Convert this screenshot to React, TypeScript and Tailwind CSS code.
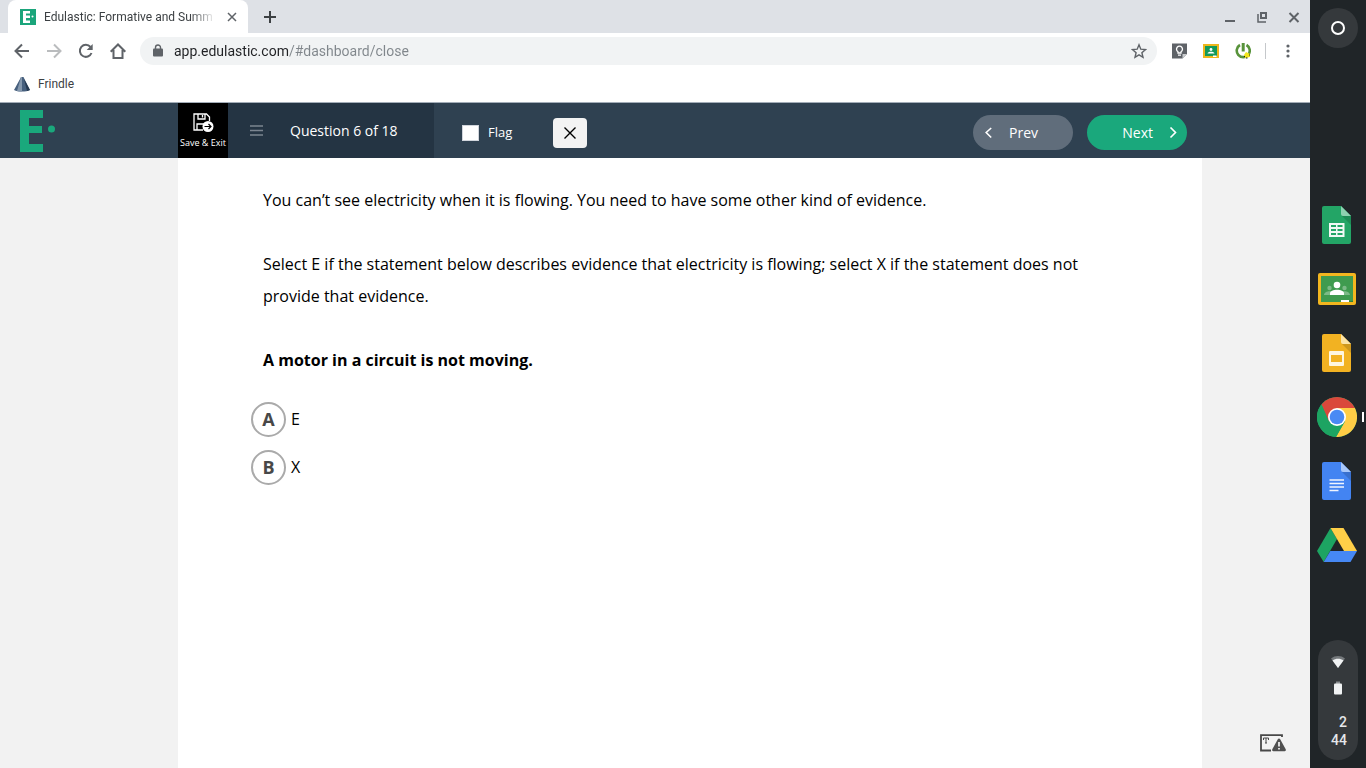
import React from "react";

const choices = [
  { label: "A", text: "E" },
  { label: "B", text: "X" },
];

const FilePage = ({
  color,
  fold,
  children,
}: {
  color: string;
  fold: string;
  children: React.ReactNode;
}) => (
  <svg width="30" height="40" viewBox="0 0 30 40">
    <path d="M2 1h17l10 10v26a2 2 0 0 1-2 2H2a2 2 0 0 1-2-2V3a2 2 0 0 1 2-2z" fill={color} />
    <path d="M20 11h9v9z" fill="#000" opacity=".15" />
    <path d="M19 1l10 10H21a2 2 0 0 1-2-2z" fill={fold} />
    {children}
  </svg>
);

const apps = [
  {
    name: "Sheets",
    icon: (
      <FilePage color="#23a566" fold="#8ed1b1">
        <path
          d="M7 18h15.500v14H7zM9 20v2h5v-2zM15.500 20v2h5v-2zM9 24v2h5v-2zM15.500 24v2h5v-2zM9 28v2h5v-2zM15.500 28v2h5v-2z"
          fill="#f1f8f4"
          fillRule="evenodd"
        />
      </FilePage>
    ),
  },
  {
    name: "Classroom",
    icon: (
      <svg width="38" height="32" viewBox="0 0 38 32">
        <rect width="38" height="32" rx="2" fill="#f2b61f" />
        <rect x="3" y="3" width="32" height="26" fill="#3f9b4f" />
        <g fill="#7cba87">
          <circle cx="11.500" cy="15" r="2.200" />
          <circle cx="26.500" cy="15" r="2.200" />
          <path d="M6 22c0-4 8-5 10-2v2zM32 22c0-4-8-5-10-2v2z" />
        </g>
        <circle cx="19" cy="12" r="3.300" fill="#fff" />
        <path d="M12 22v-1.500c0-5 14-5 14 0V22z" fill="#fff" />
        <path d="M27 29h8v-1z" fill="#2b7a3a" />
        <rect x="23" y="27" width="8" height="2" fill="#fff" />
      </svg>
    ),
  },
  {
    name: "Slides",
    icon: (
      <FilePage color="#f2b222" fold="#fbe3a6">
        <path d="M8 18h13a1 1 0 0 1 1 1v13a1 1 0 0 1-1 1H8a1 1 0 0 1-1-1V19a1 1 0 0 1 1-1zM9 22v7h11v-7z" fill="#fef6e0" fillRule="evenodd" />
      </FilePage>
    ),
  },
  {
    name: "Chrome",
    icon: (
      <svg width="40" height="40" viewBox="0 0 40 40">
        <circle cx="20" cy="20" r="20" fill="#1da462" />
        <path d="M20 11h17.900A20 20 0 0 1 19 40l8.800-15.500z" fill="#ffcd46" />
        <path d="M37.900 11A20 20 0 0 0 4.500 7.500L12 24.500 20 11z" fill="#da483b" />
        <path d="M4.500 7.500l-.8.900a20 20 0 0 0 15.300 31.600l8.800-15.500-8 5-8-5z" fill="#1da462" />
        <circle cx="20" cy="20" r="9" fill="#fff" />
        <circle cx="20" cy="20" r="7.300" fill="#4a8af4" />
      </svg>
    ),
  },
  {
    name: "Docs",
    icon: (
      <FilePage color="#4384f2" fold="#a8c7fa">
        <path d="M7.500 19H22M7.500 22.500H22M7.500 26H22M7.500 29.500h9" stroke="#f1f5fe" strokeWidth="1.600" />
      </FilePage>
    ),
  },
  {
    name: "Drive",
    icon: (
      <svg width="40" height="36" viewBox="0 0 40 36">
        <path d="M13.500 1L20 12 6.700 35 0 24z" fill="#1da462" />
        <path d="M13.500 1h13L40 24H27z" fill="#ffcf48" />
        <path d="M13.300 24H40l-6.500 11H6.700z" fill="#4688f4" />
      </svg>
    ),
  },
];

const BrowserChrome = () => (
  <div className="font-['Roboto',sans-serif] text-[#3c4043]">
    <div className="flex h-[33px] items-center bg-[#dee1e6] pl-2">
      <div className="flex h-full w-60 items-center rounded-t-lg bg-white pr-2 pl-3">
        <svg width="16" height="16" viewBox="0 0 16 16" className="shrink-0">
          <path d="M0 0h16v16H0z" fill="#1ba57b" />
          <path d="M3 2h7v2.500H6v2h4V9H6v2.500h4V14H3z" fill="#fff" />
          <circle cx="12.500" cy="7.500" r="1" fill="#fff" />
        </svg>
        <span className="ml-2 flex-1 overflow-hidden text-xs whitespace-nowrap [mask-image:linear-gradient(90deg,#000_85%,transparent)]">
          Edulastic: Formative and Summ
        </span>
        <button aria-label="Close tab" className="ml-2">
          <svg width="16" height="16" viewBox="0 0 16 16" stroke="#5f6368" strokeWidth="1.500">
            <path d="M4 4l8 8M12 4l-8 8" />
          </svg>
        </button>
      </div>
      <button aria-label="New tab" className="ml-3.5">
        <svg width="16" height="16" viewBox="0 0 16 16" stroke="#3c4043" strokeWidth="2">
          <path d="M8 2v12M2 8h12" />
        </svg>
      </button>
      <div className="ml-auto flex gap-4 pr-2">
        <button aria-label="Minimize">
          <svg width="16" height="16" viewBox="0 0 16 16" stroke="#5f6368" strokeWidth="2">
            <path d="M3 12h10" />
          </svg>
        </button>
        <button aria-label="Restore">
          <svg width="16" height="16" viewBox="0 0 16 16" fill="none" stroke="#5f6368" strokeWidth="2">
            <path d="M7 4h5v5H7z" />
            <path d="M4 5v8h8" strokeWidth="1.500" />
          </svg>
        </button>
        <button aria-label="Close window">
          <svg width="16" height="16" viewBox="0 0 16 16" stroke="#5f6368" strokeWidth="2">
            <path d="M3.500 4l9 9M12.500 4l-9 9" />
          </svg>
        </button>
      </div>
    </div>

    <div className="flex h-9 items-center pr-3.5">
      <div className="flex gap-4 pl-3.5">
        <button aria-label="Back">
          <svg width="16" height="16" viewBox="0 0 16 16" fill="none" stroke="#5f6368" strokeWidth="2">
            <path d="M15 8H2M8 1.500L1.500 8 8 14.500" />
          </svg>
        </button>
        <button aria-label="Forward">
          <svg width="16" height="16" viewBox="0 0 16 16" fill="none" stroke="#babcbe" strokeWidth="2">
            <path d="M1 8h13M8 1.500L14.500 8 8 14.500" />
          </svg>
        </button>
        <button aria-label="Reload">
          <svg width="16" height="16" viewBox="0 0 16 16" fill="none" stroke="#5f6368" strokeWidth="2">
            <path d="M13.500 10A6 6 0 1 1 12.500 4" />
            <path d="M14.700 1v6H8.700z" fill="#5f6368" stroke="none" />
          </svg>
        </button>
        <button aria-label="Home">
          <svg width="16" height="16" viewBox="0 0 16 16" fill="none" stroke="#5f6368" strokeWidth="2">
            <path d="M.7 8.700L8 1.500l7.300 7.200M3.500 7v8h9V7" />
          </svg>
        </button>
      </div>
      <div className="ml-3.5 flex h-7 flex-1 items-center rounded-full bg-[#f1f3f4] px-2.5">
        <svg width="16" height="16" viewBox="0 0 16 16" className="shrink-0">
          <path d="M4 5.500h8a1 1 0 0 1 1 1v6a1 1 0 0 1-1 1H4a1 1 0 0 1-1-1v-6a1 1 0 0 1 1-1z" fill="#5f6368" />
          <path d="M5.500 6.500V4.500a2.500 2.500 0 0 1 5 0v2" fill="none" stroke="#5f6368" strokeWidth="1.400" />
        </svg>
        <input
          aria-label="Address"
          defaultValue="app.edulastic.com/#dashboard/close"
          className="ml-2 flex-1 bg-[linear-gradient(90deg,#202124_114px,#80868b_114px)] bg-clip-text text-sm text-transparent outline-none"
        />
        <button aria-label="Bookmark this page">
          <svg width="16" height="16" viewBox="0 0 16 16" fill="none" stroke="#5f6368" strokeWidth="1.400">
            <path d="M8 1.800l1.800 4.400 4.700.4-3.600 3.100 1.100 4.600L8 11.800l-4 2.500 1.100-4.600-3.600-3.100 4.700-.4z" />
          </svg>
        </button>
      </div>
      <div className="ml-3.5 flex items-center gap-4">
        <button aria-label="Keep">
          <svg width="16" height="16" viewBox="0 0 16 16">
            <path d="M1 .5h15V11l-4.500 4.500H1z" fill="#5f6368" />
            <path d="M16 11h-4.500v4.500z" fill="#c9cbcd" />
            <path d="M7 10V8.800a3 3 0 1 1 3 0V10zM7 12.200h3" fill="none" stroke="#fff" strokeWidth="1.300" />
          </svg>
        </button>
        <button aria-label="Classroom extension">
          <svg width="16" height="16" viewBox="0 0 16 16">
            <path d="M0 1h16v14H0z" fill="#edb61c" />
            <path d="M2 3h12v10H2z" fill="#12995a" />
            <circle cx="8" cy="6.500" r="1.400" fill="#fff" />
            <path d="M4.500 10.500c0-2.500 7-2.500 7 0zM10 12.500h3.500v1.500H10z" fill="#fff" />
          </svg>
        </button>
        <button aria-label="Power extension">
          <svg width="16" height="16" viewBox="0 0 16 16" fill="none" stroke="#58933b" strokeWidth="2.600">
            <path d="M5 2a6.500 6.500 0 1 0 6.500 0" />
            <path d="M8.200 0v8.500" strokeWidth="3" />
            <path d="M9 12l2-3 4 2v3l-5 1z" fill="#f1e51b" stroke="none" />
            <path d="M9 13.500h1M11 15h1.500M14 12h1" stroke="#222" strokeWidth="1.200" />
          </svg>
        </button>
      </div>
      <span className="ml-3.5 h-4 w-px bg-[#c5c8cb]" />
      <button aria-label="Menu" className="ml-3.5">
        <svg width="16" height="16" viewBox="0 0 16 16" fill="#5f6368">
          <circle cx="8" cy="3" r="1.600" />
          <circle cx="8" cy="8" r="1.600" />
          <circle cx="8" cy="13" r="1.600" />
        </svg>
      </button>
    </div>

    <div className="flex h-[34px] items-start border-b border-[#a3adb8] px-3.5 pt-[7px]">
      <a href="#frindle" className="flex items-center gap-2 text-xs">
        <svg width="16" height="16" viewBox="0 0 16 16">
          <path d="M7 1h2.500L16 14c-4 2-12 2-16 0L6 3z" fill="#47607e" />
          <path d="M7 1h1v14.500c-3 0-4-.3-5-.6z" fill="#8598ad" />
          <path d="M10 3l6 11-3 1z" fill="#263951" />
        </svg>
        Frindle
      </a>
    </div>
  </div>
);

const TestHeader = () => (
  <header className="flex h-[55px] bg-[#2f4151] text-white">
    <div className="flex w-[178px] shrink-0 items-center pl-5">
      <svg width="36" height="42" viewBox="0 0 36 42" fill="#1aa87c" role="img" aria-label="Edulastic">
        <path d="M0 0h23v8H9v8h13v7H9v11h14v8H0z" />
        <circle cx="31.500" cy="19" r="3.500" />
      </svg>
    </div>
    <button className="flex w-[50px] shrink-0 flex-col items-center justify-center gap-1 bg-black text-[9px] leading-3 whitespace-nowrap">
      <svg width="21" height="20" viewBox="0 0 21 20" fill="none" stroke="#fff" strokeWidth="1.300">
        <path d="M10 17H1V1h12.500l3 3v4" />
        <path d="M5 1v5h7V1M9.500 2v2.500M4 17v-6h7" />
        <circle cx="15" cy="13.500" r="5.500" fill="#fff" stroke="none" />
        <path d="M11.500 13.500h6.500M15.500 11l2.500 2.500-2.500 2.500" stroke="#000" strokeWidth="1.200" />
      </svg>
      Save &amp; Exit
    </button>
    <div className="flex w-[206px] shrink-0 items-center bg-[#243443] pl-[22px] text-sm">
      <button aria-label="Question list">
        <svg width="13" height="11" viewBox="0 0 13 11" stroke="#7b8590" strokeWidth="1.300">
          <path d="M0 1h13M0 5.500h13M0 10h13" />
        </svg>
      </button>
      <span className="ml-[27px]">Question 6 of 18</span>
    </div>
    <div className="flex flex-1 items-center pt-1">
      <label className="ml-7 flex items-center gap-[9px] text-[13px]">
        <input type="checkbox" className="h-4 w-[17px] appearance-none border border-gray-300 bg-white checked:bg-[#1aa87c]" />
        Flag
      </label>
      <button
        aria-label="Cross out"
        className="ml-[41px] flex h-[30px] w-[34px] items-center justify-center rounded-sm bg-[#f3f3f3]"
      >
        <svg width="12" height="12" viewBox="0 0 12 12" stroke="#000" strokeWidth="1.400">
          <path d="M.5.500l11 11M11.500.500l-11 11" />
        </svg>
      </button>
    </div>
    <nav className="mr-[123px] flex items-center gap-3.5 pt-1 text-sm">
      <button className="flex h-[35px] w-[100px] items-center rounded-full bg-[#606d7b] pl-3">
        <svg width="8" height="12" viewBox="0 0 8 12" fill="none" stroke="#fff" strokeWidth="1.600">
          <path d="M6.200 1L1.200 5.500l5 5" />
        </svg>
        <span className="ml-4">Prev</span>
      </button>
      <button className="flex h-[35px] w-[100px] items-center justify-end rounded-full bg-[#1aa87c] pr-2.5">
        <span className="mr-4">Next</span>
        <svg width="8" height="12" viewBox="0 0 8 12" fill="none" stroke="#fff" strokeWidth="1.600">
          <path d="M1.500.500l5 5-5 5" />
        </svg>
      </button>
    </nav>
  </header>
);

const Shelf = () => (
  <aside className="relative flex w-14 shrink-0 flex-col items-center bg-[#202528] py-2 font-['Roboto',sans-serif]">
    <button aria-label="Launcher" className="flex h-10 w-10 items-center justify-center rounded-full bg-[#35393c]">
      <span className="h-3.5 w-3.5 rounded-full border-2 border-white" />
    </button>
    <div className="mt-[145px] flex w-full flex-col">
      {apps.map((app) => (
        <button key={app.name} aria-label={app.name} className="relative flex h-16 items-center justify-center pr-0.5">
          {app.icon}
          {app.name === "Chrome" && (
            <span className="absolute right-0.5 h-2.5 w-0.5 bg-white" />
          )}
        </button>
      ))}
    </div>
    <button className="mt-auto flex h-[120px] w-10 flex-col items-center rounded-full bg-[#35393c] pt-3.5 text-sm leading-[18px] font-medium text-gray-200">
      <svg width="16" height="16" viewBox="0 0 16 16" aria-hidden="true">
        <path d="M1 4.500c4-3.300 10-3.300 14 0L8 14z" fill="#74787b" />
        <path d="M2.500 6.500c3-2.300 8-2.300 11 0L8 14z" fill="#f1f3f4" />
      </svg>
      <svg width="16" height="16" viewBox="0 0 16 16" aria-hidden="true" className="mt-2.5">
        <path d="M6 1.500h4V4H6z" fill="#8a8e91" />
        <rect x="4" y="3.500" width="8" height="11" rx="1" fill="#f1f3f4" />
      </svg>
      <span className="mt-[17px] w-full pr-[11px] text-right">
        2<br />
        44
      </span>
    </button>
  </aside>
);

const App = () => {
  return (
    <div className="flex min-h-screen bg-white font-['Open_Sans',sans-serif] text-black">
      <div className="flex min-w-0 flex-1 flex-col">
        <BrowserChrome />
        <TestHeader />
        <div className="flex flex-1 bg-[#f2f2f2] pl-[178px]">
          <main className="w-full max-w-5xl bg-white px-[73px] pt-[26px]">
            <div className="px-3 text-base leading-8">
              <p>
                You can’t see electricity when it is flowing. You need to have
                some other kind of evidence.
              </p>
              <p className="mt-8">
                Select E if the statement below describes evidence that
                electricity is flowing; select X if the statement does not
                provide that evidence.
              </p>
              <p className="mt-8 font-bold">
                A motor in a circuit is not moving.
              </p>
            </div>
            <div className="mt-[26px] flex flex-col items-start gap-[13px]">
              {choices.map((choice) => (
                <label key={choice.label} className="flex items-center gap-[5px] leading-6">
                  <input type="radio" name="answer" className="peer sr-only" />
                  <span className="flex h-[35px] w-[35px] items-center justify-center rounded-full border-2 border-[#aaa] pb-px text-lg font-bold text-[#484848] peer-checked:border-[#1aa87c] peer-checked:text-[#1aa87c]">
                    {choice.label}
                  </span>
                  <span className="pb-px">{choice.text}</span>
                </label>
              ))}
            </div>
          </main>
          <div className="flex flex-1 items-end justify-end pr-6 pb-4">
            <button aria-label="Report a problem">
              <svg width="26" height="18" viewBox="0 0 26 18">
                <path d="M22 3V1.200H1V16.500h10" fill="none" stroke="#484848" strokeWidth="1.800" />
                <path d="M3.500 6V4h5v2M6 4v5M5 9h2" fill="none" stroke="#484848" />
                <path d="M19 4.500c.6 0 .9.300 1.200.8l5.500 10c.5 1 0 2-1 2H13.300c-1 0-1.500-1-1-2l5.500-10c.3-.5.6-.8 1.200-.8z" fill="#505050" />
                <path d="M19 8v4.500M19 14v1.600" stroke="#fff" strokeWidth="1.600" />
              </svg>
            </button>
          </div>
        </div>
      </div>
      <Shelf />
    </div>
  );
};

export default App;
